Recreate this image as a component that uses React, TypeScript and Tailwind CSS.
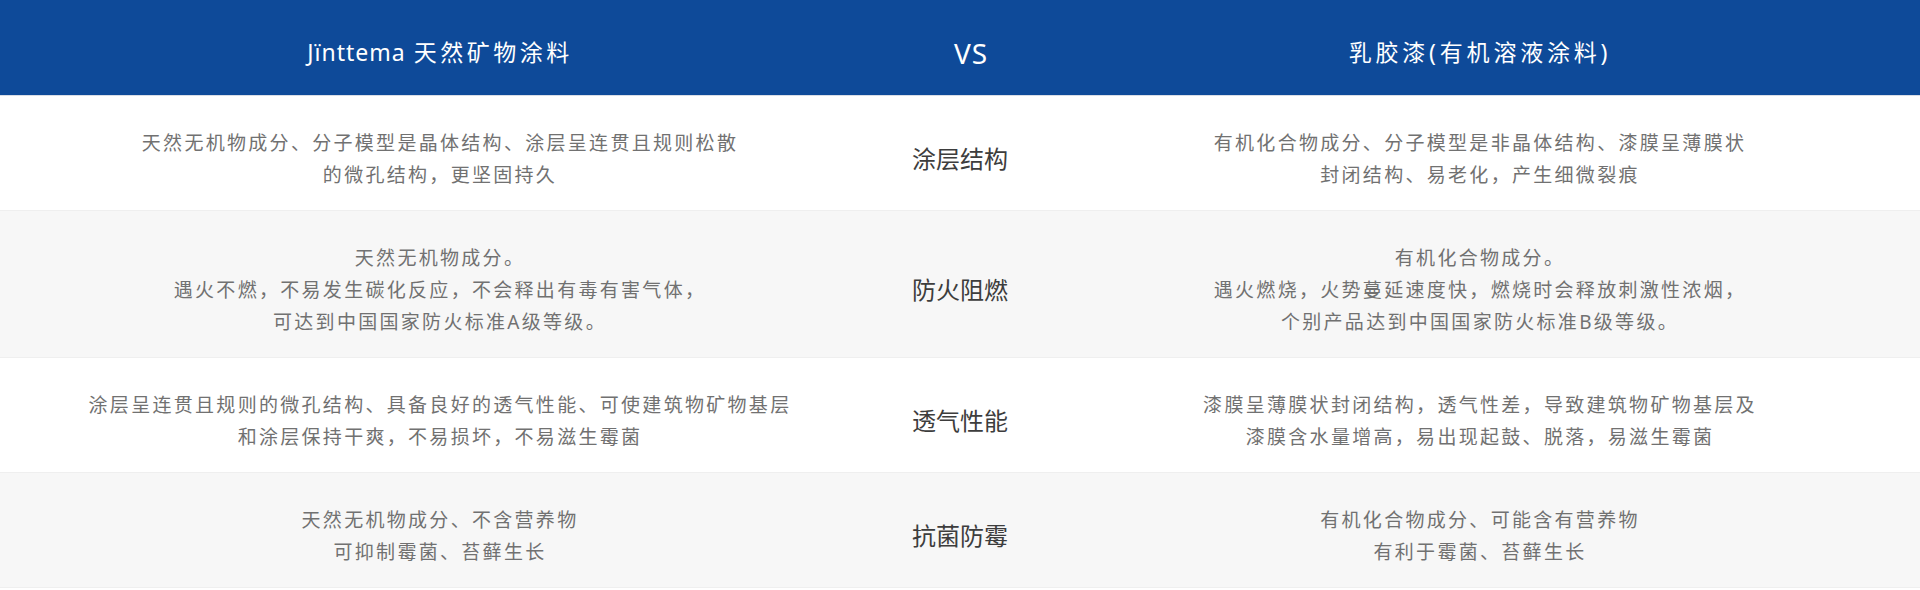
import React from 'react'

type Row = {
  label: string
  left: string[]
  right: string[]
  alt?: boolean
}

const rows: Row[] = [
  {
    label: '涂层结构',
    left: ['天然无机物成分、分子模型是晶体结构、涂层呈连贯且规则松散', '的微孔结构，更坚固持久'],
    right: ['有机化合物成分、分子模型是非晶体结构、漆膜呈薄膜状', '封闭结构、易老化，产生细微裂痕'],
  },
  {
    label: '防火阻燃',
    left: ['天然无机物成分。', '遇火不燃，不易发生碳化反应，不会释出有毒有害气体，', '可达到中国国家防火标准A级等级。'],
    right: ['有机化合物成分。', '遇火燃烧，火势蔓延速度快，燃烧时会释放刺激性浓烟，', '个别产品达到中国国家防火标准B级等级。'],
    alt: true,
  },
  {
    label: '透气性能',
    left: ['涂层呈连贯且规则的微孔结构、具备良好的透气性能、可使建筑物矿物基层', '和涂层保持干爽，不易损坏，不易滋生霉菌'],
    right: ['漆膜呈薄膜状封闭结构，透气性差，导致建筑物矿物基层及', '漆膜含水量增高，易出现起鼓、脱落，易滋生霉菌'],
  },
  {
    label: '抗菌防霉',
    left: ['天然无机物成分、不含营养物', '可抑制霉菌、苔藓生长'],
    right: ['有机化合物成分、可能含有营养物', '有利于霉菌、苔藓生长'],
    alt: true,
  },
]

const font = { fontFamily: '"Noto Sans", "Noto Sans CJK SC", sans-serif' }

const Cell = ({ lines }: { lines: string[] }) => (
  <div className="flex flex-col items-center text-center text-[19px] leading-[32px] tracking-[2.3px] text-[#717171]">
    {lines.map((l, i) => (
      <p key={i}>{l}</p>
    ))}
  </div>
)

const App = () => {
  return (
    <div className="w-[1920px] bg-white" style={font}>
      {/* header */}
      <div className="grid grid-cols-[880px_160px_880px] h-[96px] bg-[#0e4a99] text-white border-b border-[#d8dde6]">
        <div className="flex items-center justify-center pt-[10px] text-[23px]">
          <span className="tracking-[1px]">Jïnttema</span>
          <span className="ml-[8px] tracking-[3.5px]">天然矿物涂料</span>
        </div>
        <div className="flex items-center justify-center pt-[10px] pl-[22px] text-[28px] tracking-[1px]">VS</div>
        <div className="flex items-center justify-center pt-[10px] text-[23px] tracking-[3.8px]">乳胶漆(有机溶液涂料)</div>
      </div>

      {rows.map((r) => (
        <div
          key={r.label}
          className={`grid grid-cols-[880px_160px_880px] pt-[31px] pb-[19px] border-b border-[#efefef] ${r.alt ? 'bg-[#f7f7f7]' : 'bg-white'}`}
        >
          <Cell lines={r.left} />
          <div className="flex items-center justify-center text-[24px] text-[#3d3d3d]">{r.label}</div>
          <Cell lines={r.right} />
        </div>
      ))}
    </div>
  )
}

export default App
